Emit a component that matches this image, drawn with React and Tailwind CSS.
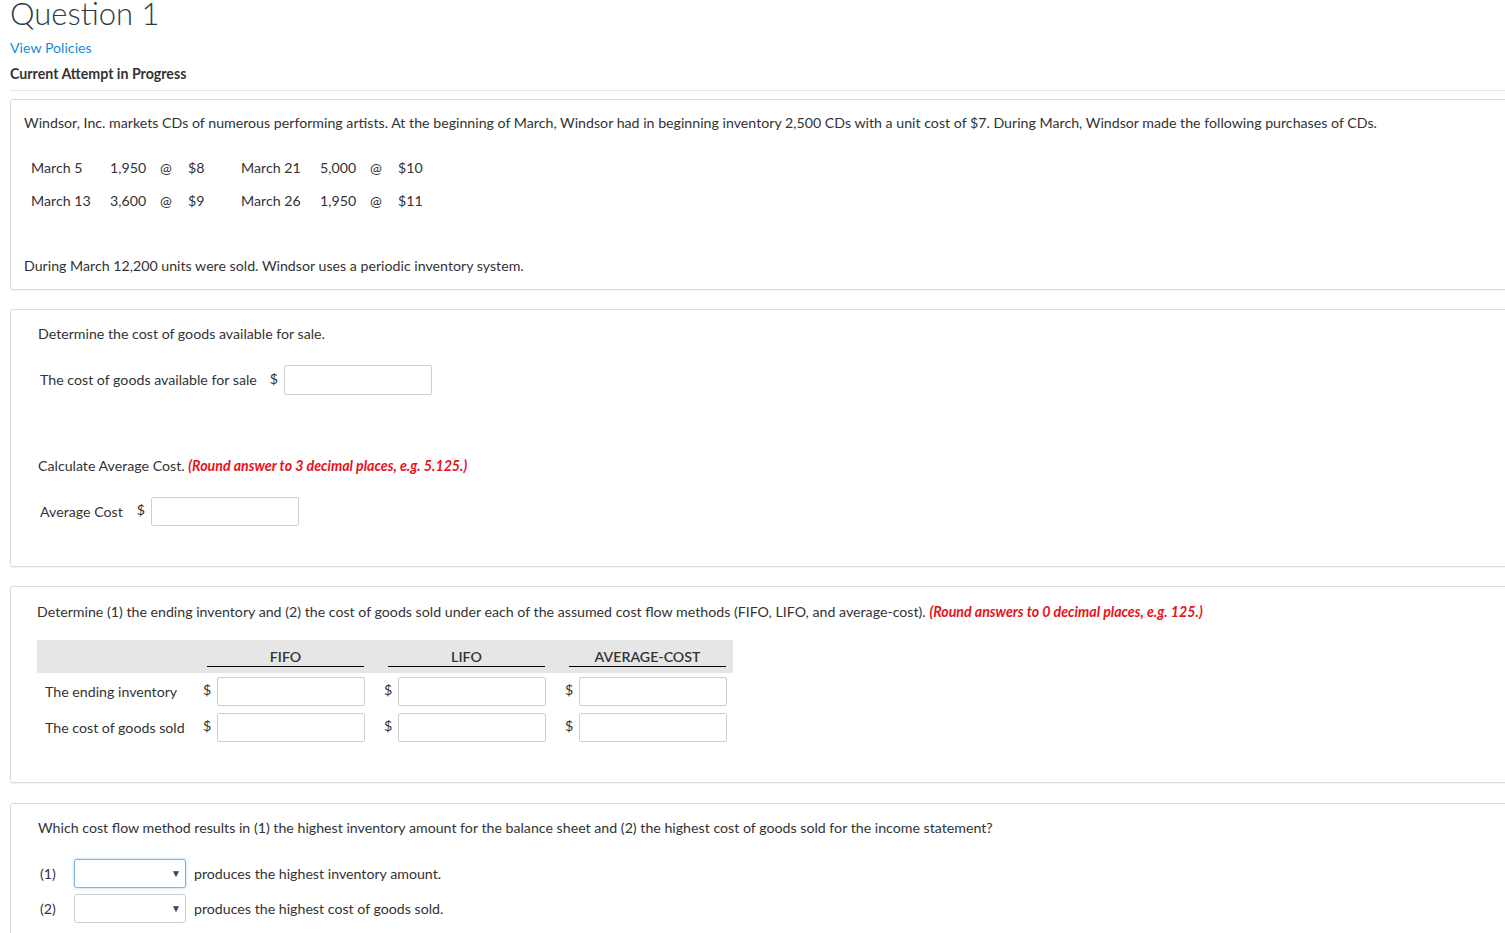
import React from 'react'

const purchases = [
  ['March 5', '1,950', '$8', 'March 21', '5,000', '$10'],
  ['March 13', '3,600', '$9', 'March 26', '1,950', '$11'],
]

function Card({ className = '', children }) {
  return (
    <div className={`w-[1520px] border border-[#dcdcdc] rounded-[3px] bg-white shadow-[0_1px_2px_rgba(0,0,0,0.06)] ${className}`}>
      {children}
    </div>
  )
}

function Money({ h = 'h-[30px]' }) {
  return (
    <div className="flex items-center">
      <span className="w-[14px] leading-[18px] -mt-[3px]">$</span>
      <div className={`w-[148px] ${h} border border-[#cfcfcf] rounded-[2px] bg-white`} />
    </div>
  )
}

function Select({ focused }) {
  return (
    <div
      className={`w-[112px] h-[29px] rounded-[3px] bg-white flex items-center justify-end pr-[4px] border ${
        focused ? 'border-[#7fb2e5] shadow-[0_0_3px_rgba(102,175,233,0.6)]' : 'border-[#cfcfcf]'
      }`}
    >
      <span className="text-[10px] text-[#444]">▼</span>
    </div>
  )
}

export default function App() {
  return (
    <div className="min-h-screen bg-white overflow-hidden text-[#333] text-[14.2px]" style={{ fontFamily: 'Lato, "Open Sans", sans-serif' }}>
      <div className="pl-[10px]">
        {/* header */}
        <h1 className="text-[31px] leading-[30px] font-light -mt-[2px] text-[#2d3b45]">Question 1</h1>
        <div className="mt-[11px] leading-[18px] text-[#1a8bd1]">View Policies</div>
        <div className="mt-[8px] leading-[18px] font-bold text-[#333]">Current Attempt in Progress</div>
        <div className="mt-[7px] h-px bg-[#e6e6e6]" />

        {/* problem */}
        <Card className="mt-[8px] pt-[14px] pb-[14px] pl-[13px]">
          <p className="leading-[18px]">
            Windsor, Inc. markets CDs of numerous performing artists. At the beginning of March, Windsor had in beginning inventory 2,500 CDs with a unit cost of $7. During March, Windsor made the following purchases of CDs.
          </p>
          <div className="mt-[19px] ml-[7px]">
            {purchases.map((r) => (
              <div key={r[0]} className="flex h-[33px] items-center">
                <span className="w-[79px]">{r[0]}</span>
                <span className="w-[50px]">{r[1]}</span>
                <span className="w-[28px]">@</span>
                <span className="w-[53px]">{r[2]}</span>
                <span className="w-[79px]">{r[3]}</span>
                <span className="w-[50px]">{r[4]}</span>
                <span className="w-[28px]">@</span>
                <span>{r[5]}</span>
              </div>
            ))}
          </div>
          <p className="mt-[40px] leading-[18px]">During March 12,200 units were sold. Windsor uses a periodic inventory system.</p>
        </Card>

        {/* part a */}
        <Card className="mt-[19px] pt-[15px] pb-[40px] pl-[27px]">
          <p className="leading-[18px]">Determine the cost of goods available for sale.</p>
          <div className="mt-[22px] flex items-center pl-[2px]">
            <span className="mr-[13px]">The cost of goods available for sale</span>
            <Money />
          </div>
          <p className="mt-[62px] leading-[18px]">
            Calculate Average Cost.{' '}
            <span className="font-bold italic text-[#e8121a]">(Round answer to 3 decimal places, e.g. 5.125.)</span>
          </p>
          <div className="mt-[22px] flex items-center pl-[2px]">
            <span className="mr-[14px]">Average Cost</span>
            <Money h="h-[29px]" />
          </div>
        </Card>

        {/* part b */}
        <Card className="mt-[19px] pt-[16px] pb-[40px] pl-[26px]">
          <p className="leading-[18px]">
            Determine (1) the ending inventory and (2) the cost of goods sold under each of the assumed cost flow methods (FIFO, LIFO, and average-cost).{' '}
            <span className="font-bold italic text-[#e8121a]">(Round answers to 0 decimal places, e.g. 125.)</span>
          </p>
          <div className="mt-[19px] w-[696px]">
            <div className="flex h-[33px] bg-[#e6e6e6]">
              <div className="w-[166px]" />
              {['FIFO', 'LIFO', 'AVERAGE-COST'].map((h, i) => (
                <div key={h} className={`w-[162px] pl-[4px] pr-[1px] ${i > 0 ? 'ml-[19px]' : ''}`}>
                  <div className="h-[27px] flex items-end justify-center border-b border-black font-semibold leading-[18px]">
                    {h}
                  </div>
                </div>
              ))}
            </div>
            {[
              ['The ending inventory', 'mt-[4px]'],
              ['The cost of goods sold', 'mt-[7px]'],
            ].map(([label, mt]) => (
              <div key={label} className={`flex items-center ${mt}`}>
                <div className="w-[166px] pl-[8px]">{label}</div>
                <Money h="h-[29px]" />
                <div className="ml-[19px]"><Money h="h-[29px]" /></div>
                <div className="ml-[19px]"><Money h="h-[29px]" /></div>
              </div>
            ))}
          </div>
        </Card>

        {/* part c */}
        <Card className="mt-[20px] pt-[15px] pb-[40px] pl-[27px]">
          <p className="leading-[18px]">
            Which cost flow method results in (1) the highest inventory amount for the balance sheet and (2) the highest cost of goods sold for the income statement?
          </p>
          <div className="mt-[22px] pl-[2px]">
            <div className="flex items-center">
              <span className="w-[34px]">(1)</span>
              <Select focused />
              <span className="ml-[8px]">produces the highest inventory amount.</span>
            </div>
            <div className="flex items-center mt-[6px]">
              <span className="w-[34px]">(2)</span>
              <Select />
              <span className="ml-[8px]">produces the highest cost of goods sold.</span>
            </div>
          </div>
        </Card>
      </div>
    </div>
  )
}
